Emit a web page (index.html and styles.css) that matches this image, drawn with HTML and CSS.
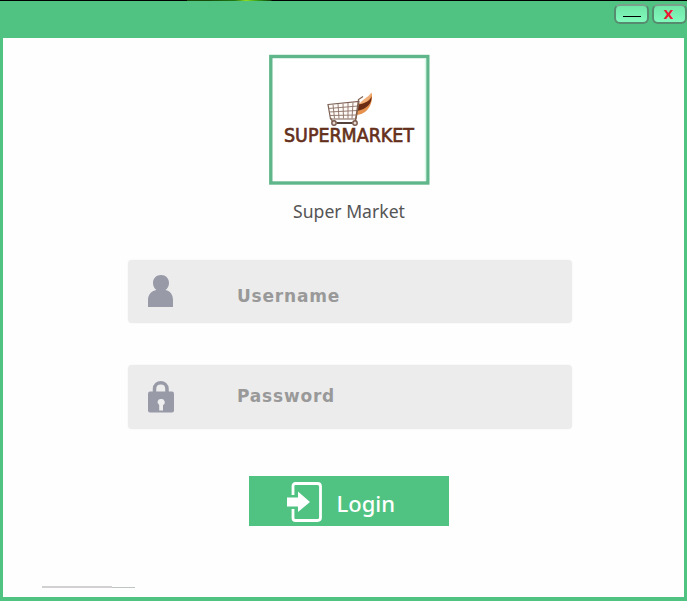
FILE: index.html
```html
<!DOCTYPE html>
<html lang="en">
<head>
<meta charset="utf-8">
<title>Super Market</title>
<link rel="stylesheet" href="styles.css">
</head>
<body>
<div class="window">
  <header class="titlebar">
    <button class="control minimize" aria-label="Minimize"><span class="dash"></span></button>
    <button class="control close">X</button>
  </header>
  <main class="content">
    <div class="logo">
      <svg width="161" height="131" viewBox="269 54.500 161 131">
        <rect x="270.800" y="57" width="157" height="126.500" fill="#fff" stroke="#60b68b" stroke-width="3.400"/>
        <path d="M425.500 59V181" stroke="#dcf8e9" stroke-width="1.500"/>
        <path d="M371.500 93C373.500 101 370 114 357 115.500L355.500 115C356 109 357 106 359 104C366 103 370 99 371.500 93Z" fill="#e5924f"/>
        <path d="M371.500 97C372 103 368 109.500 357 111.500L358.500 105C366 103.500 370 101 371.500 97Z" fill="#6b2b13"/>
        <path d="M371.500 93C371 99 368 103 359.500 104.500C362 100 367 99 371.500 93Z" fill="#f0ae78"/>
        <path d="M328 105L359 102L356 119.500L330.500 119.500Z" fill="#fffaf6" stroke="#7d6054" stroke-width="1.200"/>
        <path d="M333 105L334.500 119M338 104.500L339 119M343 104L343.500 119M348 103.500V119M353 103L352 119M328.500 109L358 106.500M329 112.500L357.500 111M330 116L356.500 115.500" stroke="#8a7166" stroke-width=".9" fill="none"/>
        <path d="M363 97L358.500 100L355.500 120.500L356.500 123.500H333L331 119" stroke="#80604f" stroke-width="1.200" fill="none"/>
        <path d="M337 123.500H352" stroke="#55423a" stroke-width="2"/>
        <g fill="#e9d9d0" stroke="#76584b" stroke-width="1.400"><circle cx="334" cy="123.500" r="2.200"/><circle cx="355" cy="123.500" r="2.200"/></g>
        <text class="brand" x="284" y="142" textLength="130" lengthAdjust="spacingAndGlyphs">SUPERMARKET</text>
      </svg>
    </div>
    <h1 class="name">Super Market</h1>
    <form class="form">
      <label class="field username">
        <svg class="field-icon" width="28" height="36" viewBox="0 0 28 36">
          <path d="M14 2C18.700 2 22 5.500 22 10C22 13 20.500 15.500 18.500 17C23.500 18 26 22 26 27V34H1V27C1 22 4 18 9.500 17C7.300 15.500 6 13 6 10C6 5.500 9.300 2 14 2Z" fill="#989aa7"/>
        </svg>
        <span class="field-text">Username</span>
      </label>
      <label class="field password">
        <svg class="field-icon" width="28" height="36" viewBox="0 0 28 36">
          <path d="M7.500 14V10C7.500 1.700 20 1.700 20 10V14" stroke="#989aa7" stroke-width="3.500" fill="none"/>
          <rect x="1" y="12.500" width="26" height="21" rx="2" fill="#989aa7"/>
          <path d="M14 20A3.200 3.200 0 0 1 16 26V31.500H12.200V26A3.200 3.200 0 0 1 14 20Z" fill="#eee"/>
        </svg>
        <span class="field-text">Password</span>
      </label>
      <button class="login" type="button">
        <svg class="login-icon" width="38" height="42" viewBox="0 0 38 42">
          <path d="M7 14V5Q7 2.500 9.500 2.500H31.500Q34.500 2.500 34.500 5.500V36.500Q34.500 39.500 31.500 39.500H9.500Q7 39.500 7 37V28" fill="none" stroke="#fff" stroke-width="2.800"/>
          <path d="M1 16.500H12V10.500L24 21L12 31V25.500H1Z" fill="#fff"/>
        </svg>
        <span class="login-text">Login</span>
      </button>
    </form>
    <div class="rule"><span class="rule-main"></span><span class="rule-end"></span></div>
  </main>
</div>
</body>
</html>
```

FILE: styles.css
```css
* {
  box-sizing: border-box;
}

body {
  margin: 0;
  overflow: hidden;
  background: linear-gradient(90deg, #000 187px, #174b0c 187px 210px, #164d0c 210px, #207b15 235px, #92df25 246px, #319b17 258px, #143c0c 271px, #000 272px);
}

.window {
  display: flex;
  flex-direction: column;
  height: 600px;
  margin-top: 1px;
  border: solid #50c382;
  border-width: 0 3px 4px;
  background: #fefefe;
}

.titlebar {
  display: flex;
  justify-content: flex-end;
  gap: 3px;
  height: 37px;
  margin: 0 -3px;
  padding-top: 3px;
  background: #50c382;
}

.control {
  display: flex;
  align-items: center;
  justify-content: center;
  width: 35px;
  height: 20px;
  padding: 1px 0 0;
  border: 2px solid #578b70;
  border-top-color: #79a18c;
  border-radius: 6px;
  background: linear-gradient(#70e6a7, #82fabb);
  font: bold 13px "DejaVu Sans", sans-serif;
  color: #ed1633;
}

.close {
  padding-right: 2px;
}

.dash {
  width: 18px;
  height: 1px;
  margin-top: 4px;
  background: #000;
}

.content {
  display: flex;
  flex-direction: column;
  align-items: center;
  padding-top: 16px;
}

.logo {
  height: 131px;
  margin-left: 12px;
}

.logo svg {
  display: block;
}

.brand {
  font: 19.5px "DejaVu Sans", sans-serif;
  fill: #65301b;
  stroke: #65301b;
  stroke-width: .7px;
}

.name {
  height: 24px;
  margin: 14px 0 0 11px;
  font: 17.6px/24px "Noto Sans", sans-serif;
  color: #555;
}

.form {
  display: flex;
  flex-direction: column;
  align-items: center;
  width: 444px;
  margin: 37px 0 0 13px;
}

.field {
  display: flex;
  align-items: flex-start;
  width: 444px;
  height: 63px;
  border-radius: 4px;
  background: #ececec;
  box-shadow: 0 0 2px #f0f0f0;
}

.field-icon {
  margin: 13px 0 0 19px;
}

.password {
  height: 64px;
  margin-top: 42px;
}

.password .field-icon {
  margin-top: 14px;
}

.field-text {
  margin: 26px 0 0 62px;
  font: bold 17px/20px "DejaVu Sans", sans-serif;
  letter-spacing: .8px;
  color: #999;
}

.password .field-text {
  margin-top: 21px;
}

.login {
  display: flex;
  width: 200px;
  height: 50px;
  margin: 47px 3px 0 0;
  padding: 5px 0 0 37px;
  border: 0;
  background: #50c382;
}

.login-text {
  margin: 7px 0 0 13px;
  font: 500 22px/30px "Noto Sans", sans-serif;
  color: #fff;
}

.rule {
  display: flex;
  align-self: flex-start;
  margin: 60px 0 0 39px;
}

.rule-main {
  width: 70px;
  height: 2px;
  background: #d2d0d2;
}

.rule-end {
  width: 23px;
  height: 1px;
  margin-top: 1px;
  background: #bdc5c0;
}
```
